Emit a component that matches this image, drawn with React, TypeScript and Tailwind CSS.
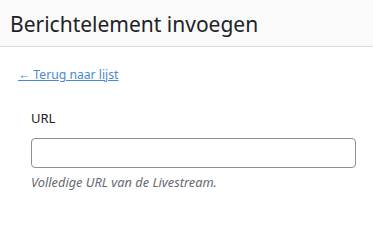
export default function App() {
  return (
    <div className="w-[373px] h-[202px] bg-white overflow-hidden" style={{ fontFamily: '"Noto Sans", "Open Sans", sans-serif' }}>
      <div className="h-[47px] bg-[#fafafa] border-b border-[#dcdcde] flex items-center px-[10px] pt-[3px]">
        <h1 className="text-[21px] leading-none text-[#1d2327] font-normal">Berichtelement invoegen</h1>
      </div>
      <div className="pl-[18px] pt-[14px]">
        <a href="#" className="text-[12.2px] leading-[16px] text-[#4a88d0] underline">← Terug naar lijst</a>
      </div>
      <div className="pl-[31px] pr-[17px] pt-[25px]">
        <label className="block text-[13px] leading-[16px] text-[#1d2327]">URL</label>
        <input type="text" className="block mt-[12px] w-full h-[30px] border border-[#8c8f94] rounded-[4px] bg-white" />
        <p className="mt-[6px] text-[12.8px] leading-[16px] italic text-[#646970]">Volledige URL van de Livestream.</p>
      </div>
    </div>
  );
}
